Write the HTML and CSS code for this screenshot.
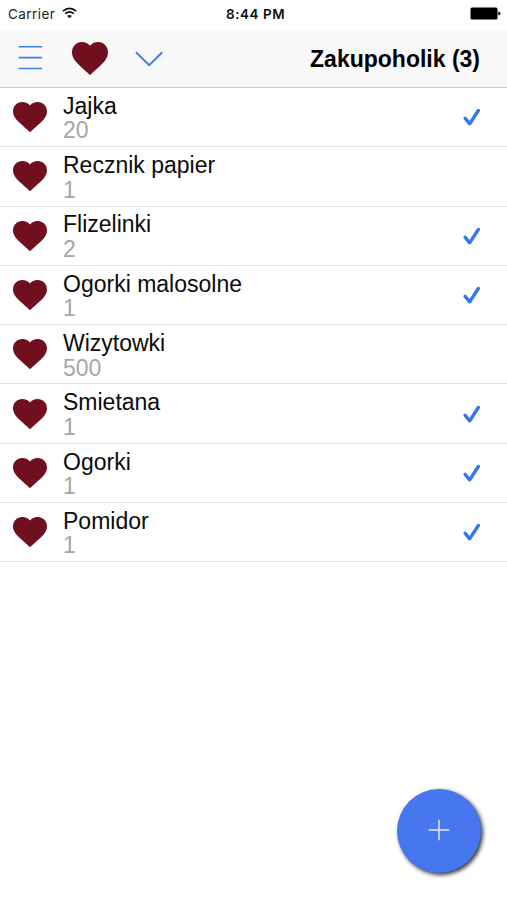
FILE: index.html
```html
<!DOCTYPE html>
<html lang="pl">
<head>
<meta charset="utf-8">
<title>Zakupoholik</title>
<link rel="stylesheet" href="styles.css">
</head>
<body>
<svg class="defs" aria-hidden="true">
  <symbol id="heart" viewBox="0 0 36 33" preserveAspectRatio="none"><path d="M18 33Q17.300 32.800 15.500 30.800C11.500 27 7 23.500 3.500 19.300C1 16.200 0 13.500 0 10.300C0 4.300 4.300 0 9.800 0C13.400 0 16.300 1.400 18 3.800C19.700 1.400 22.600 0 26.200 0C31.700 0 36 4.300 36 10.300C36 13.500 35 16.200 32.500 19.300C29 23.500 24.500 27 20.500 30.800Q18.700 32.800 18 33Z"/></symbol>
  <symbol id="check" viewBox="0 0 18 19"><path d="M2.200 10.400L6.700 15.800L15.300 2.500"/></symbol>
</svg>
<div class="status">
  <span class="carrier">Carrier</span>
  <svg class="wifi" viewBox="0 0 15 12"><path d="M.9 4.200Q7.500-1.600 14.100 4.200M3.200 6.700Q7.500 3.100 11.800 6.700"/><path class="dot" d="M7.500 11.300L5.100 8.900Q7.500 7 9.900 8.900Z"/></svg>
  <span class="time">8:44 PM</span>
  <svg class="battery" viewBox="0 0 31 13"><rect x=".5" y=".5" width="27" height="12" rx="1.500"/><path d="M28.300 4.500Q30.500 5 30.500 6.500T28.300 8.500Z"/></svg>
</div>
<header class="bar">
  <svg class="menu" viewBox="0 0 24 26"><path d="M.7 1.700H24M.7 12.600H24M.7 23.500H24"/></svg>
  <svg class="logo"><use href="#heart"/></svg>
  <svg class="chevron" viewBox="0 0 28 16"><path d="M1 1.200L14.200 14.200L27.300 1.200"/></svg>
  <h1>Zakupoholik (3)</h1>
</header>
<ul class="list">
  <li><svg class="heart"><use href="#heart"/></svg><div class="text"><div>Jajka</div><div class="count">20</div></div><svg class="check"><use href="#check"/></svg></li>
  <li><svg class="heart"><use href="#heart"/></svg><div class="text"><div>Recznik papier</div><div class="count">1</div></div></li>
  <li><svg class="heart"><use href="#heart"/></svg><div class="text"><div>Flizelinki</div><div class="count">2</div></div><svg class="check"><use href="#check"/></svg></li>
  <li><svg class="heart"><use href="#heart"/></svg><div class="text"><div>Ogorki malosolne</div><div class="count">1</div></div><svg class="check"><use href="#check"/></svg></li>
  <li><svg class="heart"><use href="#heart"/></svg><div class="text"><div>Wizytowki</div><div class="count">500</div></div></li>
  <li><svg class="heart"><use href="#heart"/></svg><div class="text"><div>Smietana</div><div class="count">1</div></div><svg class="check"><use href="#check"/></svg></li>
  <li><svg class="heart"><use href="#heart"/></svg><div class="text"><div>Ogorki</div><div class="count">1</div></div><svg class="check"><use href="#check"/></svg></li>
  <li><svg class="heart"><use href="#heart"/></svg><div class="text"><div>Pomidor</div><div class="count">1</div></div><svg class="check"><use href="#check"/></svg></li>
</ul>
<button class="fab" aria-label="Dodaj"><svg viewBox="0 0 22 22"><path d="M11 .7V21.300M.7 11H21.300"/></svg></button>
</body>
</html>
```
FILE: styles.css
```css
* { box-sizing: border-box; }
body {
  margin: 0;
  height: 900px;
  overflow: hidden;
  background: #fff;
  color: #0b0b0b;
  font-family: "Liberation Sans", Arial, sans-serif;
}
svg { display: block; flex: none; }
.defs { position: absolute; width: 0; height: 0; }
.status {
  height: 30px;
  padding: 0 6px 3px 8px;
  display: grid;
  grid-template-columns: 49px 170px 1fr 31px;
  column-gap: 5px;
  align-items: center;
  font-family: Inter, Roboto, sans-serif;
  font-size: 13.5px;
  line-height: 20px;
}
.carrier { color: #222; letter-spacing: .45px; }
.wifi { width: 15px; height: 12px; margin-top: -2px; }
.wifi path { fill: none; stroke: #111; stroke-width: 1.7; }
.wifi .dot { fill: #111; stroke: none; }
.time { font-weight: 600; font-size: 13.4px; letter-spacing: .6px; margin-left: -11px; }
.battery { width: 31px; height: 13px; fill: #000; }
.bar {
  height: 58px;
  padding: 0 27px 0 18px;
  display: flex;
  align-items: center;
  background: #f8f8f8;
  border-bottom: 1px solid #ccc;
}
.menu { width: 24px; height: 26px; margin-bottom: 2px; }
.menu path, .chevron path { fill: none; stroke: #3b80ea; stroke-width: 1.6; }
.chevron path { stroke-width: 2; }
.logo { width: 36px; height: 33px; margin-left: 30px; fill: #70101f; }
.chevron { width: 28px; height: 16px; margin: 1px 0 0 27px; }
h1 {
  margin: 0 0 0 auto;
  font-size: 23px;
  line-height: 28px;
  font-weight: 700;
  color: #000;
}
.list { margin: 0; padding: 0; list-style: none; }
.list li {
  height: 59.300px;
  padding: 0 26px 0 13px;
  display: flex;
  align-items: center;
  border-bottom: 1px solid #e2e2e2;
}
.heart { width: 34px; height: 30px; fill: #70101f; }
.text {
  margin-left: 16px;
  padding-top: 2.500px;
  font-size: 23px;
  line-height: 24.500px;
  white-space: nowrap;
}
.count { color: #a6a6a6; }
.check { width: 18px; height: 19px; margin: 1px 0 0 auto; }
#check path { fill: none; stroke: #3478ed; stroke-width: 3.4; stroke-linecap: round; stroke-linejoin: round; }
.fab {
  position: absolute;
  left: 397px;
  top: 788.500px;
  width: 84px;
  height: 84px;
  padding: 0;
  border: 0;
  border-radius: 50%;
  display: grid;
  place-items: center;
  background: #4677ee;
  box-shadow: 2px 2px 4px rgba(0, 0, 0, .8);
}
.fab svg { width: 22px; height: 22px; margin-bottom: 2px; }
.fab path { stroke: #e4ebff; stroke-width: 1.500; }
```
